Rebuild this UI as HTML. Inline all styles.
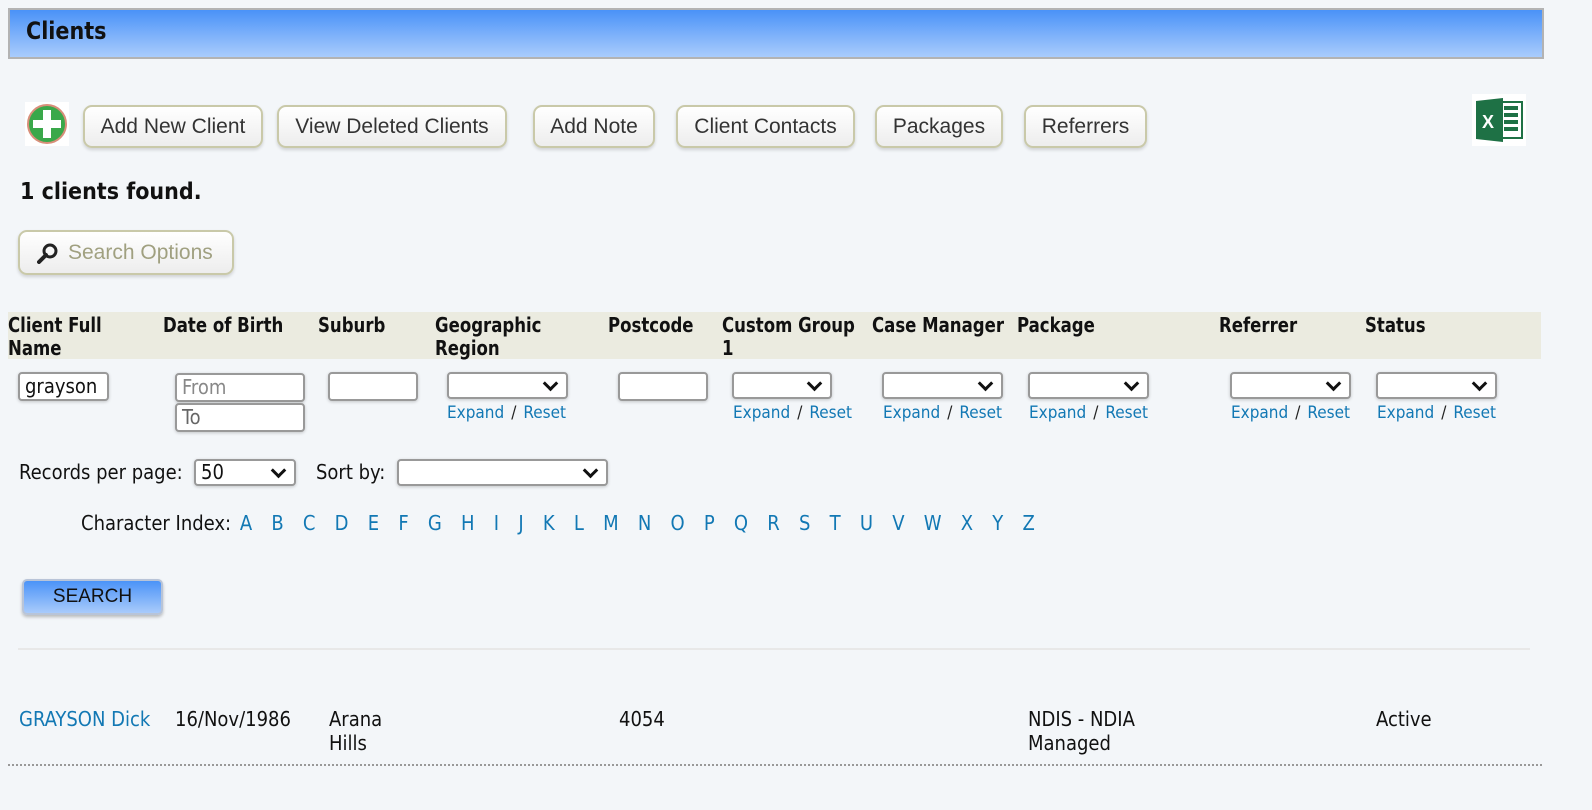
<!DOCTYPE html>
<html><head><meta charset="utf-8"><style>
*{box-sizing:border-box;margin:0;padding:0}
body{width:1592px;height:810px;background:#f3f6f9;position:relative;overflow:hidden;font-family:"DejaVu Sans Condensed","DejaVu Sans",sans-serif;font-stretch:condensed;font-size:20px;color:#111}
.a{position:absolute;white-space:nowrap}
.hdr{left:8px;top:8px;width:1536px;height:51px;border:2px solid #b3b3b3;background:linear-gradient(#4a92f8,#a9ccfc)}
.hdr span{position:absolute;left:16px;top:7px;font-weight:bold;font-size:24px;color:#111;transform:scaleX(.96);transform-origin:left}
.btn{position:absolute;top:105px;height:43px;border:2px solid #c9c9a9;border-radius:9px;background:linear-gradient(#fff,#ededed);box-shadow:0 2px 3px rgba(0,0,0,.15);font-family:"Liberation Sans",sans-serif;font-size:21px;color:#333;text-align:center;line-height:39px}
.th{position:absolute;top:312px;height:47px;left:8px;width:1533px;background:#ebebe0}
.th div{position:absolute;top:2px;font-weight:bold;font-size:20px;line-height:23px;transform:scaleX(.92);transform-origin:left;white-space:nowrap}
.in{position:absolute;height:29px;background:#fff;border:2px solid #999;border-radius:4px;box-shadow:0 1px 3px rgba(0,0,0,.2);font-size:20px;padding-left:5px;line-height:25px}
.sel{position:absolute;top:372px;width:121px;height:27px;background:#fff;border:2px solid #999;border-radius:4px;box-shadow:0 1px 3px rgba(0,0,0,.2)}
.sel:after,.s2:after{content:"";position:absolute;right:10px;top:4px;width:8px;height:8px;border-right:3px solid #111;border-bottom:3px solid #111;transform:rotate(45deg)}
.ex{position:absolute;top:403px;font-size:17px;color:#1278b4}
.ex b{font-weight:normal;color:#222;margin:0 7px}
.lk{color:#1278b4}
</style></head><body>
<div class="a hdr"><span>Clients</span></div>

<svg class="a" style="left:25px;top:102px" width="44" height="44" viewBox="0 0 44 44"><rect width="44" height="44" fill="#fff"/><circle cx="22" cy="22" r="19" fill="#3aa84a" stroke="#d88f7a" stroke-width="2"/><rect x="18" y="8" width="8" height="28" fill="#fff"/><rect x="8" y="18" width="28" height="8" fill="#fff"/></svg>
<div class="btn" style="left:83px;width:180px">Add New Client</div>
<div class="btn" style="left:277px;width:230px">View Deleted Clients</div>
<div class="btn" style="left:533px;width:122px">Add Note</div>
<div class="btn" style="left:676px;width:179px">Client Contacts</div>
<div class="btn" style="left:875px;width:128px">Packages</div>
<div class="btn" style="left:1024px;width:123px">Referrers</div>
<svg class="a" style="left:1472px;top:94px" width="54" height="52" viewBox="0 0 54 52"><rect width="54" height="52" fill="#fff"/><rect x="22" y="8" width="28" height="36" fill="#fff" stroke="#1e7145" stroke-width="2"/><g fill="#1e7145"><rect x="32" y="12" width="14" height="4"/><rect x="32" y="19" width="14" height="4"/><rect x="32" y="26" width="14" height="4"/><rect x="32" y="33" width="14" height="4"/></g><path d="M4 7 L31 4 L31 48 L4 45Z" fill="#1e7145"/><text x="10" y="34" font-family="Liberation Sans" font-weight="bold" font-size="18" fill="#fff">X</text></svg>

<div class="a" style="left:20px;top:179px;font-weight:bold;font-size:23px">1 clients found.</div>
<div class="btn" style="left:18px;top:230px;width:216px;height:45px;color:#a0a080;line-height:41px;text-align:left;padding-left:48px">Search Options</div>
<svg class="a" style="left:37px;top:242px" width="22" height="22" viewBox="0 0 22 22"><circle cx="13" cy="9" r="6" fill="none" stroke="#222" stroke-width="3"/><path d="M9 13 L2 20" stroke="#222" stroke-width="4" stroke-linecap="round"/></svg>

<div class="th">
<div style="left:0">Client Full<br>Name</div>
<div style="left:155px">Date of Birth</div>
<div style="left:310px">Suburb</div>
<div style="left:427px">Geographic<br>Region</div>
<div style="left:600px">Postcode</div>
<div style="left:714px">Custom Group<br>1</div>
<div style="left:864px">Case Manager</div>
<div style="left:1009px">Package</div>
<div style="left:1211px">Referrer</div>
<div style="left:1357px">Status</div>
</div>

<div class="in" style="left:18px;top:372px;width:91px">grayson</div>
<div class="in" style="left:175px;top:373px;width:130px;color:#888">From</div>
<div class="in" style="left:175px;top:403px;width:130px;color:#666">To</div>
<div class="in" style="left:328px;top:372px;width:90px"></div>
<div class="sel" style="left:447px"></div>
<div class="in" style="left:618px;top:372px;width:90px"></div>
<div class="sel" style="left:732px;width:100px"></div>
<div class="sel" style="left:882px"></div>
<div class="sel" style="left:1028px"></div>
<div class="sel" style="left:1230px"></div>
<div class="sel" style="left:1376px"></div>
<div class="ex" style="left:447px">Expand<b>/</b>Reset</div>
<div class="ex" style="left:733px">Expand<b>/</b>Reset</div>
<div class="ex" style="left:883px">Expand<b>/</b>Reset</div>
<div class="ex" style="left:1029px">Expand<b>/</b>Reset</div>
<div class="ex" style="left:1231px">Expand<b>/</b>Reset</div>
<div class="ex" style="left:1377px">Expand<b>/</b>Reset</div>

<div class="a" style="left:19px;top:460px">Records per page:</div>
<div class="in s2" style="left:194px;top:459px;width:102px;height:27px;line-height:23px">50</div>
<div class="a" style="left:316px;top:460px">Sort by:</div>
<div class="in s2" style="left:397px;top:459px;width:211px;height:27px"></div>

<div class="a" style="left:81px;top:511px">Character Index: <span class="lk" style="word-spacing:13.5px;margin-left:3px">A B C D E F G H I J K L M N O P Q R S T U V W X Y Z</span></div>

<div class="a" style="left:22px;top:579px;width:141px;height:36px;border:2px solid #b8c4d8;border-radius:5px;background:linear-gradient(#4b93f8,#a9cbfb);box-shadow:0 2px 3px rgba(0,0,0,.25);font-family:'Liberation Sans',sans-serif;font-size:19px;text-align:center;line-height:32px;color:#111">SEARCH</div>

<div class="a" style="left:18px;top:648px;width:1512px;height:2px;background:#e8e8e8"></div>

<div class="a lk" style="left:19px;top:707px">GRAYSON Dick</div>
<div class="a" style="left:175px;top:707px">16/Nov/1986</div>
<div class="a" style="left:329px;top:707px;line-height:24px">Arana<br>Hills</div>
<div class="a" style="left:619px;top:707px">4054</div>
<div class="a" style="left:1028px;top:707px;line-height:24px">NDIS - NDIA<br>Managed</div>
<div class="a" style="left:1376px;top:707px">Active</div>
<div class="a" style="left:8px;top:764px;width:1534px;border-top:2px dotted #999"></div>
</body></html>
